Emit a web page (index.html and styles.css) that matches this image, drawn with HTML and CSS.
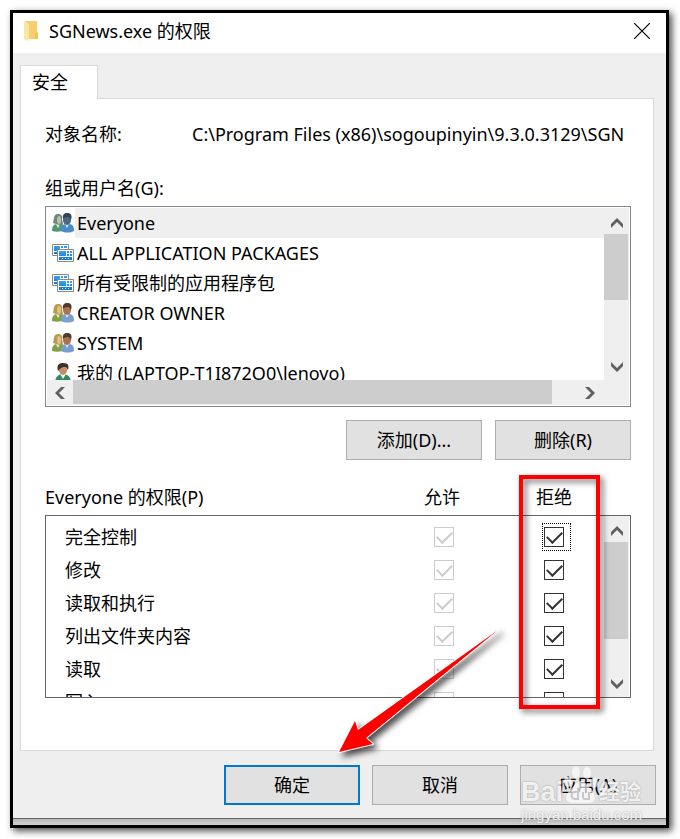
FILE: index.html
```html
<!DOCTYPE html>
<html lang="zh-CN">
<head>
    <meta charset="UTF-8">
    <meta name="viewport" content="width=device-width, initial-scale=1.0">
    <title>SGNews.exe 的权限</title>
    <link rel="stylesheet" href="styles.css">
</head>
<body>
    <!-- shared icons -->
    <svg class="defs" aria-hidden="true">
        <defs>
            <linearGradient id="screen" x1="0" y1="0" x2="0" y2="1">
                <stop offset="0" stop-color="#3aa0ee"/>
                <stop offset="1" stop-color="#0a78d6"/>
            </linearGradient>
            <symbol id="users" viewBox="0 0 22 20">
                <path class="shirt-a" d="M0 18c0-5 2-7 5-7h4c3 0 4 2 4 6-4 2-9 2-13 1z"/>
                <path d="M4 11l2 4 2-4z" fill="#eef3ea"/>
                <path class="hair-a" d="M1 10c1-3 0-9 5-9 3 0 5 2 4 5l1 5-4 1z"/>
                <ellipse class="face-a" cx="7" cy="7" rx="2" ry="4"/>
                <path class="shirt-b" d="M9 18c0-4 1-6 4-7h4c4 0 5 3 5 7-4 2-9 2-13 0z"/>
                <path d="M13 11l2 4 2-4z" fill="#dce9f5"/>
                <ellipse class="face-b" cx="15" cy="7" rx="4" ry="5"/>
                <path class="hair-b" d="M11 6c-1-6 3-6 5-6 4 0 4 4 3 7l-2-3c-2 0-4 0-6 2z"/>
            </symbol>
            <symbol id="user" viewBox="0 0 22 20">
                <path d="M3 20c0-6 3-8 6-9h3c5 1 7 4 7 9z" fill="#2f8a63"/>
                <path d="M8 11l3 5 3-5z" fill="#f0f6f2"/>
                <ellipse cx="11" cy="7" rx="4" ry="5" fill="#c58d62"/>
                <path d="M6 8C4 1 8 0 11 0c6 0 6 3 5 7l-2-3c-3 0-5 0-8 4z" fill="#3b302b"/>
            </symbol>
            <symbol id="apps" viewBox="0 0 22 18">
                <path d="M.5.5h16v11H.5z" fill="#fff" stroke="#8a8a8a"/>
                <path d="M2 2h6v5H2zM9 2h2v2H9zM12 2h3v2h-3zM2 8h3v2H2z" fill="url(#screen)"/>
                <path d="M5.500 5.500h16v12h-16z" fill="#fff" stroke="#8a8a8a"/>
                <path d="M7 7h7v5H7zM15 7h2v2h-2zM18 7h2v2h-2zM15 10h2v2h-2zM18 10h2v2h-2zM7 13h13v3H7z" fill="url(#screen)"/>
                <path d="M10 14h1v1h-1zM13 14h1v1h-1zM16 14h1v1h-1z" fill="#fff"/>
            </symbol>
            <symbol id="chevron" viewBox="0 0 12 10">
                <path d="M0 6l6-6 6 6v4L6 4 0 10z" fill="#606060"/>
            </symbol>
        </defs>
    </svg>

    <main class="window">
        <header class="titlebar">
            <svg class="folder" viewBox="0 0 16 22" aria-hidden="true">
                <path d="M3 1h11v11l1 1v6H3z" fill="#f5cf6b"/>
                <path d="M12 13l2-1 1 1v6h-3z" fill="#edc35c"/>
                <path d="M1 1l5 3v14l-2 3-3-2z" fill="#fde6a1"/>
            </svg>
            <h1>SGNews.exe 的权限</h1>
            <button class="close" type="button" aria-label="关闭">
                <svg viewBox="0 0 16 16"><path d="M0 0l16 16M16 0L0 16" stroke="#000" stroke-width="1.200"/></svg>
            </button>
        </header>

        <div class="body">
            <div class="tabs" role="tablist">
                <button class="tab" type="button" role="tab" aria-selected="true">安全</button>
            </div>

            <section class="panel">
                <div class="object">
                    <label for="objectName">对象名称:</label>
                    <input type="text" id="objectName" readonly value="C:\Program Files (x86)\sogoupinyin\9.3.0.3129\SGN">
                </div>

                <div class="label" id="groupLabel">组或用户名(G):</div>
                <div class="groups">
                    <div class="groups-main">
                        <ul class="group-list" role="listbox" aria-labelledby="groupLabel">
                            <li class="everyone" role="option" aria-selected="true"><svg><use href="#users"/></svg><span>Everyone</span></li>
                            <li role="option"><svg><use href="#apps"/></svg><span>ALL APPLICATION PACKAGES</span></li>
                            <li role="option"><svg><use href="#apps"/></svg><span>所有受限制的应用程序包</span></li>
                            <li role="option"><svg><use href="#users"/></svg><span>CREATOR OWNER</span></li>
                            <li role="option"><svg><use href="#users"/></svg><span>SYSTEM</span></li>
                            <li role="option"><svg><use href="#user"/></svg><span>我的 (LAPTOP-T1I872O0\lenovo)</span></li>
                        </ul>
                        <div class="scroll-v">
                            <button type="button" aria-label="向上"><svg><use href="#chevron"/></svg></button>
                            <div class="track"><div class="thumb thumb-groups"></div></div>
                            <button type="button" aria-label="向下"><svg class="down"><use href="#chevron"/></svg></button>
                        </div>
                    </div>
                    <div class="scroll-h">
                        <button type="button" aria-label="向左"><svg class="left"><use href="#chevron"/></svg></button>
                        <div class="track"><div class="thumb"></div></div>
                        <button type="button" aria-label="向右"><svg class="right"><use href="#chevron"/></svg></button>
                    </div>
                </div>

                <div class="actions">
                    <button class="btn" type="button">添加(D)...</button>
                    <button class="btn" type="button">删除(R)</button>
                </div>

                <div class="permissions">
                    <div class="perm-head">
                        <span class="perm-title" id="permLabel">Everyone 的权限(P)</span>
                        <span class="perm-allow">允许</span>
                        <span class="perm-deny">拒绝</span>
                    </div>
                    <div class="perm-box">
                        <div class="perm-scroll">
                            <table aria-labelledby="permLabel">
                                <tbody>
                                    <tr>
                                        <th scope="row">完全控制</th>
                                        <td class="allow"><input type="checkbox" aria-label="允许 完全控制" checked disabled></td>
                                        <td class="deny"><span class="focus"><input type="checkbox" aria-label="拒绝 完全控制" checked></span></td>
                                    </tr>
                                    <tr>
                                        <th scope="row">修改</th>
                                        <td class="allow"><input type="checkbox" aria-label="允许 修改" checked disabled></td>
                                        <td class="deny"><input type="checkbox" aria-label="拒绝 修改" checked></td>
                                    </tr>
                                    <tr>
                                        <th scope="row">读取和执行</th>
                                        <td class="allow"><input type="checkbox" aria-label="允许 读取和执行" checked disabled></td>
                                        <td class="deny"><input type="checkbox" aria-label="拒绝 读取和执行" checked></td>
                                    </tr>
                                    <tr>
                                        <th scope="row">列出文件夹内容</th>
                                        <td class="allow"><input type="checkbox" aria-label="允许 列出文件夹内容" checked disabled></td>
                                        <td class="deny"><input type="checkbox" aria-label="拒绝 列出文件夹内容" checked></td>
                                    </tr>
                                    <tr>
                                        <th scope="row">读取</th>
                                        <td class="allow"><input type="checkbox" aria-label="允许 读取" checked disabled></td>
                                        <td class="deny"><input type="checkbox" aria-label="拒绝 读取" checked></td>
                                    </tr>
                                    <tr>
                                        <th scope="row">写入</th>
                                        <td class="allow"><input type="checkbox" aria-label="允许 写入" checked disabled></td>
                                        <td class="deny"><input type="checkbox" aria-label="拒绝 写入" checked></td>
                                    </tr>
                                </tbody>
                            </table>
                        </div>
                        <div class="scroll-v">
                            <button type="button" aria-label="向上"><svg><use href="#chevron"/></svg></button>
                            <div class="track"><div class="thumb thumb-perms"></div></div>
                            <button type="button" aria-label="向下"><svg class="down"><use href="#chevron"/></svg></button>
                        </div>
                    </div>
                    <div class="highlight"></div>
                    <svg class="arrow" viewBox="0 0 162 124" aria-hidden="true">
                        <path d="M1 123L17 92l3 9L160 1 28 109l7 6z"/>
                    </svg>
                </div>
            </section>

            <footer class="buttons">
                <button class="btn btn-default" type="button">确定</button>
                <button class="btn" type="button">取消</button>
                <button class="btn" type="button">应用(A)</button>
            </footer>
        </div>
        <div class="edge"></div>

        <div class="watermark">
            <div class="brand">
                <span>Bai</span>
                <svg viewBox="0 0 36 38" aria-hidden="true">
                    <ellipse cx="5" cy="16" rx="4" ry="5"/>
                    <ellipse cx="13" cy="6" rx="4" ry="6"/>
                    <ellipse cx="24" cy="7" rx="4" ry="6"/>
                    <ellipse cx="31" cy="17" rx="4" ry="5"/>
                    <path d="M18 15c5 0 6 5 10 8 5 4 6 14-2 14H10C1 37 2 28 8 23c4-3 5-8 10-8z"/>
                    <path class="du" d="M15 22v11h-3a3 3 0 0 1 0-7h3M20 26v5q0 2 2 2h4v-7"/>
                </svg>
                <span class="brand-cn">经验</span>
            </div>
            <div class="site">jingyan.baidu.com</div>
        </div>
    </main>
</body>
</html>
```

FILE: styles.css
```css
* {
    box-sizing: border-box;
}
body {
    margin: 0;
    padding: 10px 11px 11px 10px;
    background: #fff;
    color: #000;
    font-family: "Noto Sans", "Noto Sans CJK SC", sans-serif;
    font-size: 18px;
    line-height: 24px;
}
button, input {
    font: inherit;
    color: inherit;
}
.defs {
    position: absolute;
    width: 0;
    height: 0;
}
.window {
    position: relative;
    border: 3px solid #000;
    background: #efefef;
    box-shadow: 3px 3px 7px rgba(0, 0, 0, 0.7);
}

/* title bar */
.titlebar {
    display: flex;
    align-items: center;
    height: 40px;
    padding: 0 15px 5px 10px;
    background: #fff;
}
.folder {
    width: 16px;
    height: 22px;
    margin-right: 10px;
}
h1 {
    flex: 1;
    margin: 0;
    font-size: 18px;
    font-weight: normal;
}
.close {
    display: flex;
    padding: 1px;
    border: 0;
    background: none;
}
.close svg {
    width: 16px;
    height: 16px;
}

/* tab page */
.body {
    padding: 12px 10px 13px 7px;
}
.tabs {
    display: flex;
}
.tab {
    position: relative;
    z-index: 1;
    width: 78px;
    height: 34px;
    margin-bottom: -1px;
    padding: 0 0 2px 11px;
    border: 1px solid #d9d9d9;
    border-bottom: 0;
    background: #fff;
    text-align: left;
}
.panel {
    margin-right: 2px;
    padding: 22px 22px 52px 24px;
    border: 1px solid #d9d9d9;
    background: #fff;
}
.object {
    display: flex;
    align-items: center;
    height: 26px;
    margin-bottom: 29px;
}
.object label {
    width: 147px;
    flex: none;
}
.object input {
    flex: 1;
    min-width: 0;
    padding: 0;
    border: 0;
    outline: 0;
    background: none;
}
.label {
    margin-bottom: 6px;
}

/* group list */
.groups {
    border: 1px solid #828790;
    padding: 1px;
    background: #fff;
}
.groups-main {
    display: flex;
    height: 172px;
}
.group-list {
    flex: 1;
    margin: 0;
    padding: 0;
    overflow: hidden;
    list-style: none;
}
.group-list li {
    display: flex;
    align-items: center;
    height: 30px;
    padding-left: 5px;
}
.group-list svg {
    flex: none;
    width: 22px;
    height: 20px;
    margin-right: 1px;
}
.group-list span {
    flex: 1;
    padding-left: 2px;
    line-height: 30px;
}
.group-list .everyone span {
    background: #efefef;
}
.shirt-a { fill: var(--shirt-a, #83a044); }
.hair-a { fill: var(--hair-a, #b99b48); }
.face-a { fill: var(--face-a, #e3bd94); }
.shirt-b { fill: var(--shirt-b, #7a9fce); }
.face-b { fill: var(--face-b, #a87350); }
.hair-b { fill: var(--hair-b, #4f3b2e); }
.everyone {
    --shirt-a: #4f9673;
    --hair-a: #71877a;
    --face-a: #b9c0b0;
    --shirt-b: #4c8bcb;
    --face-b: #4b6680;
    --hair-b: #2f4359;
}

/* scroll bars */
.scroll-v {
    display: flex;
    flex-direction: column;
    flex: none;
    width: 25px;
    background: #efefef;
}
.scroll-h {
    display: flex;
    height: 25px;
    padding-right: 26px;
    background: #efefef;
}
.scroll-v button, .scroll-h button {
    display: flex;
    align-items: center;
    justify-content: center;
    flex: none;
    width: 26px;
    height: 26px;
    padding: 0;
    border: 0;
    background: none;
}
.scroll-v button {
    width: 25px;
}
.scroll-v button:first-child {
    padding-top: 3px;
}
.scroll-v svg, .scroll-h svg {
    width: 12px;
    height: 10px;
}
.down {
    transform: rotate(180deg);
}
.left {
    transform: rotate(-90deg);
}
.right {
    transform: rotate(90deg);
}
.track {
    flex: 1;
}
.thumb {
    background: #cdcdcd;
}
.scroll-h .thumb {
    width: 95%;
    height: 24px;
}
.scroll-v .thumb {
    width: 24px;
}
.thumb-groups {
    height: 55%;
}
.thumb-perms {
    height: 75%;
}

/* push buttons */
.actions {
    display: flex;
    justify-content: flex-end;
    gap: 13px;
    margin: 13px 0 25px;
}
.btn {
    width: 136px;
    height: 40px;
    padding: 0;
    border: 1px solid #adadad;
    background: #e1e1e1;
}
.btn-default {
    border: 2px solid #0078d7;
}
.buttons {
    display: flex;
    justify-content: flex-end;
    gap: 12px;
    padding-top: 14px;
}

/* permissions */
.permissions {
    position: relative;
}
.perm-head {
    display: flex;
    padding-right: 26px;
    margin-bottom: 6px;
}
.perm-title {
    flex: 1;
}
.perm-allow {
    width: 122px;
    text-align: center;
}
.perm-deny {
    width: 102px;
    text-align: center;
}
.perm-box {
    display: flex;
    height: 183px;
    padding-right: 1px;
    border: 1px solid #646464;
}
.perm-scroll {
    flex: 1;
    padding-top: 4px;
    overflow: hidden;
}
table {
    width: 100%;
    border-collapse: collapse;
    table-layout: fixed;
}
tr {
    height: 33px;
}
th {
    padding: 0 0 0 19px;
    font-weight: normal;
    text-align: left;
}
td {
    padding: 0;
    text-align: center;
}
.allow {
    width: 120px;
}
.deny {
    width: 100px;
}
input[type="checkbox"] {
    appearance: none;
    display: block;
    position: relative;
    width: 20px;
    height: 20px;
    margin: 0 auto;
    border: 1px solid #333;
    background: #fff;
}
input[type="checkbox"]::after {
    content: "";
    position: absolute;
    left: 2px;
    top: 3px;
    width: 13px;
    height: 7px;
    border: solid #333;
    border-width: 0 0 2px 2px;
    transform: rotate(-45deg);
}
input[type="checkbox"]:disabled, input[type="checkbox"]:disabled::after {
    border-color: #ccc;
}
.focus {
    display: block;
    width: 29px;
    height: 28px;
    margin-left: 38px;
    padding: 4px 7px 4px 2px;
    outline: 1px dotted #000;
    outline-offset: -1px;
}

/* callouts */
.highlight {
    position: absolute;
    top: -10px;
    right: 31px;
    width: 81px;
    height: 234px;
    border: 4px solid #f00;
    filter: drop-shadow(3px 3px 3px rgba(0, 0, 0, 0.6));
}
.arrow {
    position: absolute;
    top: 144px;
    right: 131px;
    width: 162px;
    height: 124px;
    overflow: visible;
    fill: #f00;
    stroke: #fff;
    stroke-width: 2;
    stroke-linejoin: round;
    paint-order: stroke;
    filter: drop-shadow(4px 4px 3px rgba(0, 0, 0, 0.7));
}

/* bottom edge */
.edge {
    height: 7px;
    border-top: 1px solid #666;
    background: linear-gradient(#b8b8b8, #d0d0d0);
}

/* watermark */
.watermark {
    position: absolute;
    right: 24px;
    bottom: -1px;
    color: rgba(255, 255, 255, 0.85);
    font-family: "Liberation Sans", "Noto Sans CJK SC", sans-serif;
    text-shadow: 0 0 2px #999;
    pointer-events: none;
}
.brand {
    display: flex;
    align-items: flex-end;
    font-size: 27px;
    font-weight: bold;
}
.brand svg {
    width: 36px;
    height: 38px;
    fill: rgba(255, 255, 255, 0.65);
}
.brand .du {
    fill: none;
    stroke: #c8c8c8;
    stroke-width: 2;
}
.brand-cn {
    font-size: 21px;
}
.site {
    font-size: 15px;
    line-height: 22px;
}
```
